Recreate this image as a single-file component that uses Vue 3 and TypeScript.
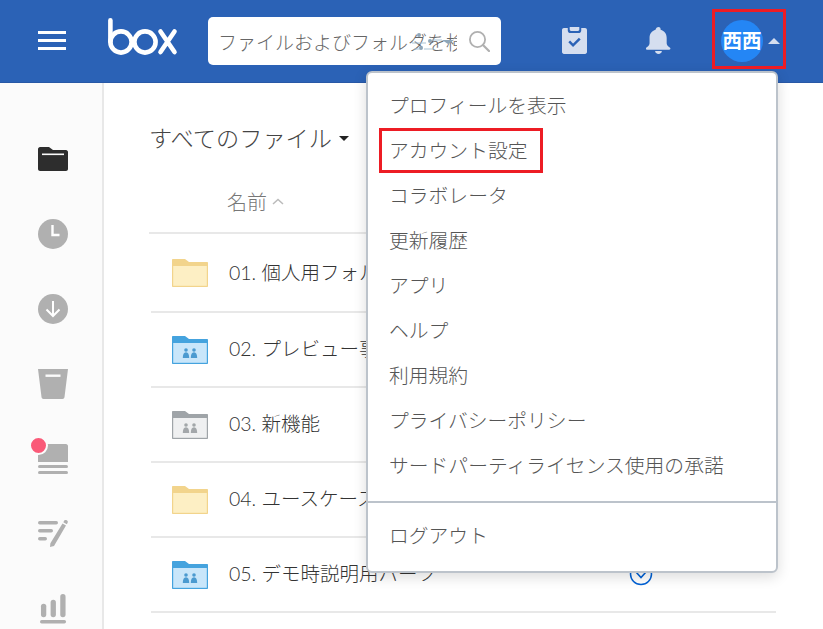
<template>
  <div class="page">
    <header class="topbar">
      <button class="burger"><span></span><span></span><span></span></button>
      <svg class="logo" viewBox="0 0 70 38" width="70" height="38">
        <g fill="none" stroke="#fff" stroke-width="4.6" stroke-linecap="round">
          <path d="M2.4 2.4v21" />
          <circle cx="13" cy="24" r="10.6" />
          <circle cx="37" cy="24" r="10.6" />
          <path d="M52.5 13.5l14 20.500M66.500 13.500l-14 20.500" />
        </g>
      </svg>
      <div class="search">
        <span class="search-text">ファイルおよびフォルダを検索</span>
        <svg class="search-overlay" viewBox="0 0 42 20" width="42" height="20">
          <g fill="#8fa6b8">
            <circle cx="7" cy="3" r="2" />
            <circle cx="18" cy="9" r="2" />
            <circle cx="9" cy="16" r="2" />
            <path d="M30 8h12l-6 4z" />
          </g>
          <path d="M0 11h14M20 8h10M2 17h6M12 17h10" stroke="#a9c3d6" stroke-width="1.2" fill="none" />
        </svg>
        <svg class="search-icon" viewBox="0 0 22 22" width="22" height="22">
          <circle cx="9.500" cy="9.500" r="7.600" fill="none" stroke="#b0b0b0" stroke-width="1.800" />
          <path d="M15 15l6 6" stroke="#b0b0b0" stroke-width="2.200" stroke-linecap="round" />
        </svg>
      </div>
      <svg class="clip" viewBox="0 0 26 28" width="25" height="27">
        <path fill="#d5deef" d="M2 1h4v2.500c0 1.600 1.200 2.800 2.800 2.800h8.400c1.600 0 2.800-1.200 2.800-2.800V1h4c1 0 2 1 2 2v23c0 1-1 2-2 2H2c-1 0-2-1-2-2V3c0-1 1-2 2-2z" />
        <path fill="#d5deef" d="M8 0h10v2.500c0 .8-.6 1.500-1.400 1.500H9.400C8.600 4 8 3.300 8 2.500z" />
        <path fill="none" stroke="#2b62b6" stroke-width="2.600" d="M7.500 15l4 4 7-7" />
      </svg>
      <svg class="bell" viewBox="0 0 26 28" width="25" height="27">
        <path fill="#d5deef" d="M13 0c1.300 0 2.200.9 2.200 2.200v.6c4 1 6.300 4.400 6.300 8.400v5.600c0 2 1.500 3.200 3.500 4.700.8.700.4 2-.8 2H1c-1.200 0-1.600-1.300-.8-2 2-1.500 3.500-2.700 3.500-4.700v-5.600c0-4 2.300-7.400 6.300-8.400v-.6C10.800.9 11.700 0 13 0z" />
        <path fill="#d5deef" d="M9.500 25h7c0 1.700-1.500 3-3.500 3s-3.500-1.300-3.500-3z" />
      </svg>
      <div class="account">
        <div class="avatar">西西</div>
        <span class="caret-up"></span>
      </div>
    </header>

    <div class="body">
      <nav class="sidebar">
        <div class="slot">
          <svg viewBox="0 0 30 24" width="30" height="24">
            <path fill="#2d2d2d" d="M2 0h9l4 3h13c1 0 2 1 2 2v17c0 1-1 2-2 2H2c-1 0-2-1-2-2V2C0 1 1 0 2 0z" />
            <rect x="4" y="6.500" width="22" height="1.600" fill="#fbfbfb" />
          </svg>
        </div>
        <div class="slot">
          <svg viewBox="0 0 30 30" width="30" height="30">
            <circle cx="15" cy="15" r="15" fill="#b0b0b0" />
            <path d="M14.500 6v10h7" fill="none" stroke="#fff" stroke-width="2.400" />
          </svg>
        </div>
        <div class="slot">
          <svg viewBox="0 0 30 30" width="30" height="30">
            <circle cx="15" cy="15" r="15" fill="#b0b0b0" />
            <path d="M15 7v15M8.500 15.500L15 22l6.500-6.500" fill="none" stroke="#fff" stroke-width="2" />
          </svg>
        </div>
        <div class="slot">
          <svg viewBox="0 0 30 30" width="30" height="30">
            <path fill="#b0b0b0" d="M0 0h30l-3.500 28c-.1 1-1 2-2 2h-19c-1 0-1.900-1-2-2z" />
            <rect x="7.500" y="5.500" width="15" height="2.400" fill="#fbfbfb" />
          </svg>
        </div>
        <div class="slot">
          <div class="updates">
            <svg viewBox="0 0 30 30" width="30" height="30">
              <path fill="#b0b0b0" d="M2 0h26c1 0 2 1 2 2v16H0V2C0 1 1 0 2 0z" />
              <rect y="21" width="30" height="3" rx="1.500" fill="#b0b0b0" />
              <rect y="27" width="30" height="3" rx="1.500" fill="#b0b0b0" />
            </svg>
            <span class="dot"></span>
          </div>
        </div>
        <div class="slot">
          <svg viewBox="0 0 30 27" width="30" height="27">
            <g fill="#b0b0b0">
              <rect y="1" width="20" height="3.400" rx="1.700" />
              <rect y="9" width="15" height="3.400" rx="1.700" />
              <rect y="17" width="9" height="3.400" rx="1.700" />
              <path d="M24.500 3.500l3.500 2L16 26l-4 1 .4-3.800zM26 1a2 2 0 0 1 3.500 2l-.7 1.200-3.500-2z" />
            </g>
          </svg>
        </div>
        <div class="slot">
          <svg viewBox="0 0 28 31" width="27" height="30">
            <g fill="#b0b0b0">
              <rect x="1" y="10" width="5.500" height="14" rx="2.700" />
              <rect x="11" y="6" width="5.500" height="18" rx="2.700" />
              <rect x="21" y="0" width="5.500" height="24" rx="2.700" />
              <rect y="27" width="27" height="3.500" rx="1.700" />
            </g>
          </svg>
        </div>
      </nav>

      <main class="content">
        <h1 class="title">すべてのファイル<span class="caret-down"></span></h1>
        <div class="col-head">名前
          <svg viewBox="0 0 12 7" width="12" height="7">
            <path d="M1 6l5-4.600L11 6" fill="none" stroke="#bbb" stroke-width="1.500" />
          </svg>
        </div>
        <div v-for="row in rows" :key="row.name" class="row">
          <svg class="folder" viewBox="0 0 36 28" width="36" height="28">
            <path :fill="row.tab" d="M1 0h12l4 3h18c.6 0 1 .4 1 1v23c0 .6-.4 1-1 1H1c-.6 0-1-.4-1-1V1c0-.6.4-1 1-1z" />
            <rect x="1.200" y="7" width="33.600" height="19.800" :fill="row.fill" />
            <g v-if="row.people" :fill="row.person">
              <circle cx="14" cy="14" r="1.800" />
              <circle cx="22" cy="14" r="1.800" />
              <path d="M10.800 22c0-3.500 1-5.800 3.200-5.800s3.200 2.300 3.200 5.800zM18.800 22c0-3.500 1-5.800 3.200-5.800s3.200 2.300 3.200 5.800z" />
            </g>
          </svg>
          <span class="name">{{ row.name }}</span>
        </div>
        <svg class="row-action" viewBox="0 0 24 24" width="24" height="24">
          <circle cx="12" cy="12" r="10.500" fill="none" stroke="#0061d5" stroke-width="1.500" />
          <path d="M7 10l5 5.500 5-5.500" fill="none" stroke="#0061d5" stroke-width="1.600" />
        </svg>
      </main>
    </div>

    <div class="menu">
      <ul class="menu-list">
        <li v-for="item in menuItems" :key="item">{{ item }}</li>
      </ul>
      <div class="menu-sep"></div>
      <ul class="menu-list">
        <li>ログアウト</li>
      </ul>
    </div>

    <div class="mark mark-account"></div>
    <div class="mark mark-settings"></div>
  </div>
</template>

<script setup lang="ts">
interface Row {
  name: string;
  tab: string;
  fill: string;
  person: string;
  people: boolean;
}

const yellow = { tab: '#f2d48c', fill: '#fdefc4', person: '', people: false };
const blue = { tab: '#45a3de', fill: '#c9e6fa', person: '#4b9ad0', people: true };
const gray = { tab: '#9fa4a8', fill: '#eff0f1', person: '#a3a7aa', people: true };

const rows: Row[] = [
  { name: '01. 個人用フォルダ', ...yellow },
  { name: '02. プレビュー事例', ...blue },
  { name: '03. 新機能', ...gray },
  { name: '04. ユースケース', ...yellow },
  { name: '05. デモ時説明用パーツ', ...blue },
];

const menuItems = [
  'プロフィールを表示',
  'アカウント設定',
  'コラボレータ',
  '更新履歴',
  'アプリ',
  'ヘルプ',
  '利用規約',
  'プライバシーポリシー',
  'サードパーティライセンス使用の承諾',
];
</script>

<style>
html,
body {
  margin: 0;
  height: 100%;
  overflow: hidden;
  background: #fff;
}
</style>

<style scoped>
.page {
  position: relative;
  width: 823px;
  height: 629px;
  overflow: hidden;
  font-family: Lato, 'Noto Sans CJK JP', sans-serif;
  font-weight: 300;
}

.topbar {
  display: flex;
  align-items: center;
  box-sizing: border-box;
  height: 83px;
  background: #2b62b6;
  border-bottom: 1px solid #2858a6;
}

.burger {
  display: flex;
  flex-direction: column;
  gap: 5px;
  width: 28px;
  margin: 0 0 2px 38px;
  padding: 0;
  border: 0;
  background: none;
}

.burger span {
  display: block;
  height: 3px;
  background: #fff;
}

.logo {
  margin-left: 42px;
  margin-bottom: 8px;
}

.search {
  position: relative;
  display: flex;
  align-items: center;
  width: 293px;
  height: 48px;
  margin-left: 30px;
  padding: 0 11px 0 10px;
  box-sizing: border-box;
  background: #fff;
  border-radius: 5px;
}

.search-text {
  flex: 1;
  overflow: hidden;
  white-space: nowrap;
  color: #666;
  font-size: 19px;
}

.search-overlay {
  position: absolute;
  left: 204px;
  top: 15px;
}

.search-icon {
  margin-left: 11px;
}

.clip {
  margin: 0 0 2px 61px;
}

.bell {
  margin: 0 0 2px 59px;
}

.account {
  display: flex;
  align-items: center;
  margin-left: 50px;
}

.avatar {
  width: 42px;
  height: 42px;
  border-radius: 50%;
  background: #2486f5;
  color: #fff;
  font-size: 19.500px;
  font-weight: 700;
  line-height: 42px;
  text-align: center;
  white-space: nowrap;
}

.caret-up {
  width: 0;
  height: 0;
  margin-left: 5px;
  border: 6px solid transparent;
  border-top: 0;
  border-bottom-color: #d5deef;
}

.body {
  display: flex;
  height: 546px;
}

.sidebar {
  flex: none;
  box-sizing: border-box;
  width: 104px;
  padding: 38px 0 0 4px;
  background: #fbfbfb;
  border-right: 2px solid #e8e8e8;
}

.slot {
  display: flex;
  align-items: center;
  justify-content: center;
  height: 75px;
}

.updates {
  position: relative;
  height: 30px;
}

.dot {
  position: absolute;
  top: -8px;
  left: -9px;
  width: 15px;
  height: 15px;
  border-radius: 50%;
  background: #fa5a78;
  border: 2px solid #fbfbfb;
}

.content {
  position: relative;
  flex: 1;
  padding: 0 47px 0 45px;
}

.title {
  display: flex;
  align-items: center;
  margin: 38px 0 0;
  color: #444;
  font-size: 23.200px;
  font-weight: 300;
  line-height: 34px;
}

.caret-down {
  width: 0;
  height: 0;
  margin-left: 7px;
  border: 5.500px solid transparent;
  border-bottom: 0;
  border-top-color: #222;
}

.col-head {
  display: flex;
  align-items: center;
  gap: 5px;
  box-sizing: border-box;
  height: 79px;
  padding: 16px 0 0 78px;
  border-bottom: 2px solid #e8e8e8;
  color: #777;
  font-size: 20px;
}

.row {
  display: flex;
  align-items: center;
  box-sizing: border-box;
  height: 75px;
  margin-left: 2px;
  padding-left: 21px;
  border-bottom: 2px solid #e8e8e8;
}

.col-head + .row {
  height: 79px;
}

.name {
  margin-left: 21px;
  margin-bottom: 5px;
  color: #333;
  font-size: 19.500px;
  white-space: nowrap;
}

.col-head + .row .name {
  margin-bottom: 2px;
}

.row-action {
  position: absolute;
  left: 525px;
  top: 479px;
}

.menu {
  position: absolute;
  left: 366px;
  top: 71px;
  box-sizing: border-box;
  width: 412px;
  height: 502px;
  padding-top: 10px;
  background: #fff;
  border: 2px solid #bcc3cb;
  border-radius: 6px;
  box-shadow: 0 4px 14px rgba(0, 0, 0, 0.14);
}

.menu-list {
  margin: 0;
  padding: 0;
  list-style: none;
}

.menu-list li {
  height: 45px;
  padding-left: 21px;
  color: #555;
  font-size: 19.800px;
  line-height: 45px;
}

.menu-sep {
  height: 2px;
  margin: 13px 0 10px;
  background: #bcc3cb;
}

.mark {
  position: absolute;
  box-sizing: border-box;
  border: 3px solid #ed1c24;
}

.mark-account {
  left: 712px;
  top: 9px;
  width: 74px;
  height: 60px;
}

.mark-settings {
  left: 379px;
  top: 128px;
  width: 164px;
  height: 45px;
}
</style>
